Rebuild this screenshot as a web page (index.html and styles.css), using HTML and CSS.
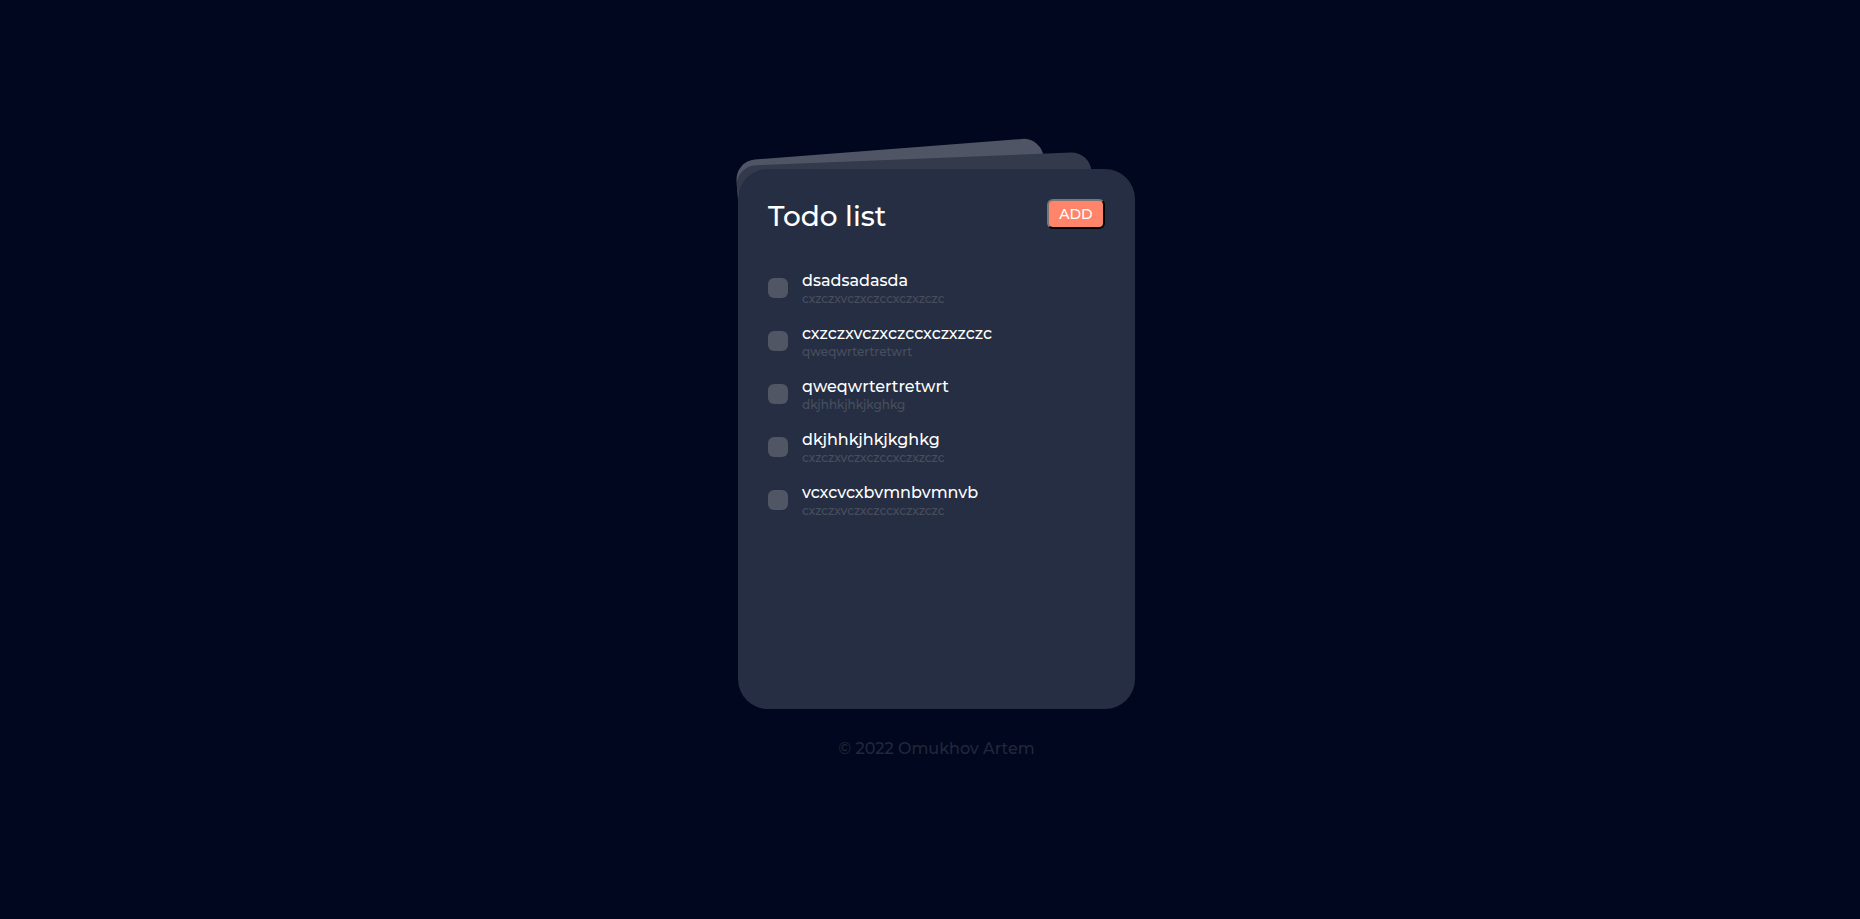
FILE: index.html
```html
<!DOCTYPE html>
<html lang="en">
<head>
<meta charset="utf-8">
<title>Todo list</title>
<link rel="stylesheet" href="styles.css">
</head>
<body>
<div class="page">
  <main class="stack">
    <div class="sheet sheet-back"></div>
    <div class="sheet sheet-middle"></div>
    <section class="card">
      <header class="card-header">
        <h1 class="card-title">Todo list</h1>
        <button class="add" type="button">ADD</button>
      </header>
      <ul class="todos">
        <li class="todo">
          <input class="check" type="checkbox" id="todo-1">
          <label class="text" for="todo-1"><span class="name">dsadsadasda</span><span class="note">cxzczxvczxczccxczxzczc</span></label>
        </li>
        <li class="todo">
          <input class="check" type="checkbox" id="todo-2">
          <label class="text" for="todo-2"><span class="name">cxzczxvczxczccxczxzczc</span><span class="note">qweqwrtertretwrt</span></label>
        </li>
        <li class="todo">
          <input class="check" type="checkbox" id="todo-3">
          <label class="text" for="todo-3"><span class="name">qweqwrtertretwrt</span><span class="note">dkjhhkjhkjkghkg</span></label>
        </li>
        <li class="todo">
          <input class="check" type="checkbox" id="todo-4">
          <label class="text" for="todo-4"><span class="name">dkjhhkjhkjkghkg</span><span class="note">cxzczxvczxczccxczxzczc</span></label>
        </li>
        <li class="todo">
          <input class="check" type="checkbox" id="todo-5">
          <label class="text" for="todo-5"><span class="name">vcxcvcxbvmnbvmnvb</span><span class="note">cxzczxvczxczccxczxzczc</span></label>
        </li>
      </ul>
    </section>
  </main>
  <footer class="copyright">© 2022 Omukhov Artem</footer>
</div>
</body>
</html>
```
FILE: styles.css
```css
* {
  box-sizing: border-box;
}

body {
  margin: 0;
  min-height: 100vh;
  background: #00071e;
  color: #fff;
  font-family: Montserrat, Inter, sans-serif;
  font-weight: 500;
}

.page {
  display: flex;
  flex-direction: column;
  align-items: center;
  gap: 28px;
  padding: 169px 0 40px 13px;
}

.stack {
  position: relative;
  width: 100%;
  max-width: 397px;
}

.sheet {
  position: absolute;
  height: 60px;
  border-radius: 20px;
  transform-origin: top left;
}

.sheet-back {
  top: -8px;
  left: -3px;
  width: 308px;
  background: #505565;
  transform: rotate(-4.4deg);
}

.sheet-middle {
  top: -3px;
  left: -2px;
  width: 355px;
  height: 40px;
  background: #323a4c;
  transform: rotate(-2.3deg);
}

.card {
  position: relative;
  min-height: 540px;
  padding: 30px;
  border-radius: 30px;
  background: #262e43;
}

.card-header {
  display: flex;
  justify-content: space-between;
  align-items: flex-start;
  margin-bottom: 38px;
}

.card-title {
  margin: 0;
  font-size: 28px;
  font-weight: 500;
  line-height: 34px;
}

.add {
  width: 58px;
  height: 30px;
  padding: 0;
  border: 2px outset #767676;
  border-color: #767676 #212121 #212121 #767676;
  border-radius: 6px;
  background: #ff8469;
  color: #fff;
  font: 500 14px/18px Montserrat, Inter, sans-serif;
}

.todos {
  display: grid;
  gap: 18px;
  margin: 0;
  padding: 0;
  list-style: none;
}

.todo {
  display: flex;
  align-items: flex-start;
  gap: 14px;
}

.check {
  flex: none;
  width: 20px;
  height: 20px;
  margin: 7px 0 0;
  border-radius: 6px;
  background: #515665;
  appearance: none;
}

.text {
  display: grid;
}

.name {
  font-size: 16px;
  line-height: 20px;
}

.note {
  color: #484e5e;
  font-size: 12px;
  line-height: 15px;
}

.copyright {
  color: #20283b;
  font-size: 16px;
  line-height: 24px;
}
```
